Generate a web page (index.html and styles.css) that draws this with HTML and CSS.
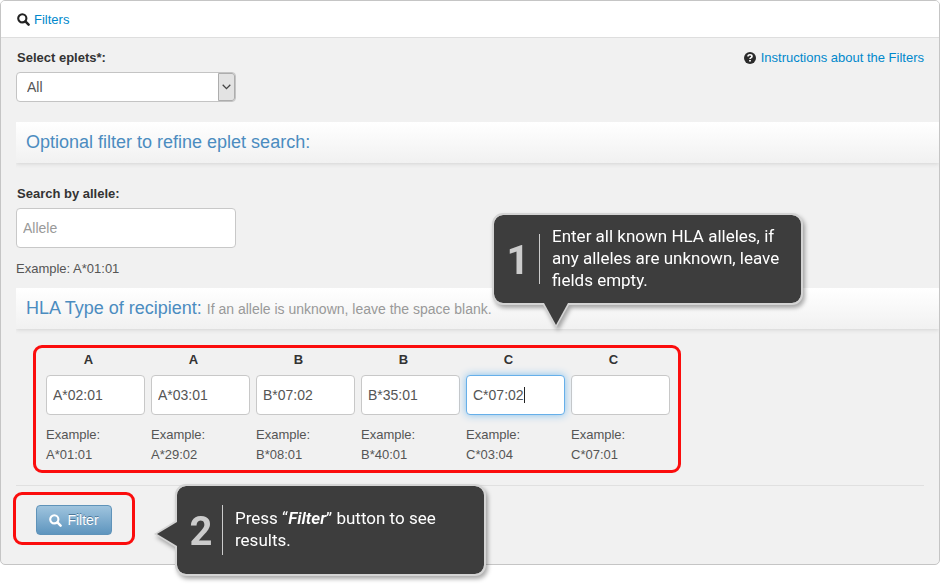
FILE: index.html
```html
<!DOCTYPE html>
<html lang="en">
<head>
<meta charset="utf-8">
<title>Eplet filters</title>
<link rel="stylesheet" href="styles.css">
</head>
<body>
<svg class="sprite" aria-hidden="true">
  <symbol id="search" viewBox="0 0 13 13">
    <circle cx="5.3" cy="5.3" r="4.1" fill="none" stroke="currentColor" stroke-width="2.1"/>
    <path d="M8.4 8.4l3.2 3.2" stroke="currentColor" stroke-width="2.5" stroke-linecap="round"/>
  </symbol>
</svg>
<main class="panel">
  <header class="panel-head">
    <svg class="icon" aria-hidden="true"><use href="#search"/></svg>
    <a href="#filters">Filters</a>
  </header>
  <form class="panel-body" id="filters">
    <div class="top-row">
      <div class="field">
        <label class="label" for="eplets">Select eplets*:</label>
        <div class="select-wrap">
          <select id="eplets"><option>All</option></select>
          <span class="select-arrow"><svg width="9" height="6" viewBox="0 0 9 6" aria-hidden="true"><path d="M.7.8l3.8 3.8L8.3.8" fill="none" stroke="#444" stroke-width="1.3"/></svg></span>
        </div>
      </div>
      <div class="help">
        <svg class="help-icon" viewBox="0 0 12 12" aria-hidden="true">
          <circle cx="6" cy="6" r="6" fill="#2b2b2b"/>
          <path d="M4 4.5C4 3.3 4.8 2.8 6 2.8s2 .6 2 1.6C8 5.600 6 5.600 6 7" fill="none" stroke="#fff" stroke-width="1.6"/>
          <path d="M5.100 8h1.800v1.500H5.100z" fill="#fff"/>
        </svg>
        <a href="#instructions">Instructions about the Filters</a>
      </div>
    </div>

    <h2 class="band">Optional filter to refine eplet search:</h2>

    <div class="field allele">
      <label class="label" for="allele">Search by allele:</label>
      <input class="text wide" id="allele" type="text" placeholder="Allele">
      <p class="hint">Example: A*01:01</p>
    </div>

    <h2 class="band">HLA Type of recipient: <small>If an allele is unknown, leave the space blank.</small></h2>

    <div class="hla marked">
      <div class="cell"><label for="a1">A</label><input class="text" id="a1" type="text" value="A*02:01"><p class="hint">Example: A*01:01</p></div>
      <div class="cell"><label for="a2">A</label><input class="text" id="a2" type="text" value="A*03:01"><p class="hint">Example: A*29:02</p></div>
      <div class="cell"><label for="b1">B</label><input class="text" id="b1" type="text" value="B*07:02"><p class="hint">Example: B*08:01</p></div>
      <div class="cell"><label for="b2">B</label><input class="text" id="b2" type="text" value="B*35:01"><p class="hint">Example: B*40:01</p></div>
      <div class="cell"><label for="c1">C</label><div class="active-field"><input class="text active" id="c1" type="text" value="C*07:02"><span class="caret"></span></div><p class="hint">Example: C*03:04</p></div>
      <div class="cell"><label for="c2">C</label><input class="text" id="c2" type="text"><p class="hint">Example: C*07:01</p></div>
    </div>

    <hr>
    <div class="submit marked">
      <button class="btn" type="button"><svg class="icon" aria-hidden="true"><use href="#search"/></svg>Filter</button>
    </div>
  </form>

  <aside class="callout one">
    <svg class="tail" width="30" height="26" viewBox="0 0 30 26" aria-hidden="true"><path d="M1 0L15 25L29 0z" fill="#d4d4d4"/><path d="M3 0L15 22L27 0z" fill="#3d3d3d"/></svg>
    <strong class="step">1</strong>
    <p>Enter all known HLA alleles, if any alleles are unknown, leave fields empty.</p>
  </aside>
  <aside class="callout two">
    <svg class="tail" width="24" height="28" viewBox="0 0 24 28" aria-hidden="true"><path d="M22 1L1 14L22 27z" fill="#d4d4d4"/><path d="M24 2L4 14L24 26z" fill="#3d3d3d"/></svg>
    <strong class="step">2</strong>
    <p>Press “<em>Filter</em>” button to see results.</p>
  </aside>
</main>
</body>
</html>
```
FILE: styles.css
```css
* { box-sizing: border-box; }
body {
  margin: 0;
  min-height: 100vh;
  background: #fff;
  color: #555;
  font: 13px/20px "Liberation Sans", Arial, sans-serif;
}
p, h2 { margin: 0; }
a { color: #0088cc; text-decoration: none; }
input, select, button { font: inherit; color: inherit; margin: 0; }
.sprite { position: absolute; width: 0; height: 0; }
.icon { width: 13px; height: 13px; flex: none; }

.panel {
  position: relative;
  border: 1px solid #c5c5c5;
  border-radius: 5px;
  background: #f1f1f1;
}
.panel-head {
  display: flex;
  align-items: center;
  gap: 4px;
  height: 37px;
  padding: 1px 0 0 16px;
  border-bottom: 1px solid #dedede;
  border-radius: 4px 4px 0 0;
  background: #fff;
  color: #222;
}
.panel-body { padding: 10px 0 19px 15px; }
.top-row {
  display: flex;
  justify-content: space-between;
  padding-right: 15px;
  margin-bottom: 20px;
}
.label {
  display: block;
  margin-bottom: 4px;
  padding-left: 1px;
  color: #333;
  font-weight: bold;
}
.help { display: flex; gap: 5px; height: 20px; align-items: center; }
.help-icon { width: 12px; height: 12px; }

.select-wrap { position: relative; width: 220px; }
select {
  display: block;
  width: 100%;
  height: 30px;
  padding: 0 24px 0 10px;
  border: 1px solid #c4c4c4;
  border-radius: 4px;
  background: #fff;
  appearance: none;
  font-size: 14px;
}
.select-arrow {
  position: absolute;
  inset: 1px 1px 1px auto;
  display: grid;
  place-items: center;
  width: 17px;
  border: 1px solid #adadad;
  border-radius: 0 3px 3px 0;
  background: #e3e3e3;
  pointer-events: none;
}

.band {
  padding: 10px;
  min-height: 41px;
  background: linear-gradient(#fff, #f1f1f1);
  box-shadow: 0 1px 4px #d4d4d4;
  clip-path: inset(0 0 -5px 0);
  color: #4b8cc0;
  font-size: 18px;
  font-weight: normal;
  line-height: 20px;
}
.band small { color: #999; font-size: 14px; }
.allele { padding: 21px 0 9px; }
.text {
  display: block;
  width: 99px;
  height: 40px;
  padding: 0 6px;
  border: 1px solid #c8c8c8;
  border-radius: 4px;
  background: #fff;
  outline: 0;
  font-size: 14px;
}
.text::placeholder { color: #999; }
.wide { width: 220px; }
.hint { margin-top: 10px; }
.allele .hint { margin-top: 11px; }

.marked {
  width: fit-content;
  border: 3px solid #fb0d0d;
  border-radius: 9px;
}
.hla {
  display: flex;
  gap: 6px;
  margin: 16px 0 12px 17px;
  padding: 2px 8px 5px 10px;
}
.cell { width: 99px; }
.cell label {
  display: block;
  margin-bottom: 5px;
  padding-right: 14px;
  color: #333;
  font-weight: bold;
  text-align: center;
}
.cell .hint { width: 70px; }
.active-field { position: relative; }
.active { border-color: #66afe9; box-shadow: 0 0 8px #82bfee; }
.caret {
  position: absolute;
  left: 58px;
  top: 12px;
  width: 1px;
  height: 16px;
  background: #222;
}
hr { height: 1px; margin: 0 15px 6px 0; border: 0; background: #e0e0e0; }
.submit { margin-left: -3px; padding: 10px 20px 7px; }
.btn {
  display: flex;
  align-items: center;
  justify-content: center;
  gap: 5px;
  width: 76px;
  height: 30px;
  padding: 0;
  border: 1px solid #5f93b9;
  border-radius: 4px;
  background: linear-gradient(#9fc4de, #5e95be);
  color: #fff;
  font-size: 14px;
  text-shadow: 0 -1px 0 #4c7798;
}

.callout {
  position: absolute;
  display: flex;
  align-items: center;
  width: 311px;
  height: 92px;
  border: 2px solid #d4d4d4;
  border-radius: 11px;
  background: #3d3d3d;
  background-clip: padding-box;
  filter: drop-shadow(2px 3px 2px #0005);
  color: #fff;
  font: 17px/22px Roboto, sans-serif;
}
.callout.one { left: 491px; top: 212px; }
.callout.two { left: 174px; top: 483px; }
.callout p { width: 250px; padding: 0 0 3px 12px; }
.callout em { font-weight: 600; }
.step {
  display: grid;
  place-items: center;
  width: 46px;
  height: 50px;
  padding: 3px 0 0 3px;
  border-right: 1px solid #ccc;
  color: #ccc;
  font-size: 40px;
}
.tail { position: absolute; }
.one .tail { left: 47px; top: 88px; }
.two .tail { left: -24px; top: 34px; }
```
